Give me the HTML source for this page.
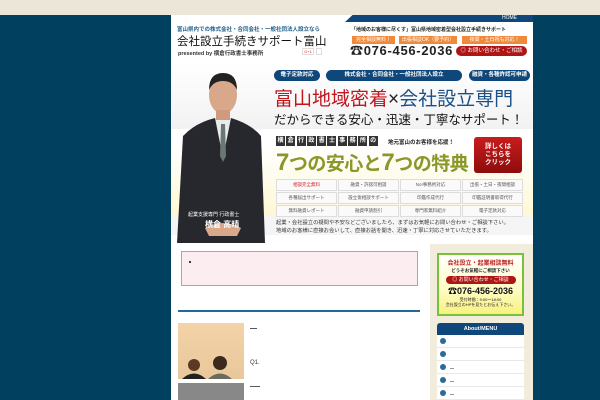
<!DOCTYPE html>
<html><head><meta charset="utf-8"><style>
*{margin:0;padding:0;box-sizing:border-box}
body{width:600px;height:400px;overflow:hidden;background:#02405f;font-family:"Liberation Sans","Noto Sans CJK JP",sans-serif;position:relative}
.a{position:absolute;white-space:nowrap}
.pill{position:absolute;background:#10477a;color:#fff;font-size:5.5px;font-weight:bold;height:11px;line-height:11px;border-radius:6px;text-align:center}
.tag{position:absolute;background:#f08a3a;color:#fff;font-size:5px;height:8px;line-height:8px;text-align:center;top:36px}
.g{position:absolute;font-size:4.5px;color:#555;background:#fafafa;border:1px solid #ddd;height:12px;line-height:10px;text-align:center;width:61px}
.mi{position:absolute;left:437px;width:87px;height:13px;border-bottom:1px solid #e8e8e8;background:#fff}
.mi i{position:absolute;left:3px;top:3px;width:6px;height:6px;border-radius:50%;background:#2d6a99}
.mi b{position:absolute;left:13px;top:7px;width:4px;height:1px;background:#999}
.k{background:#333;display:inline-block;width:9px;text-align:center;margin-right:1.3px}
</style></head><body>
<div class="a" style="left:0;top:0;width:600px;height:15px;background:#ece6d8"></div>
<div class="a" style="left:171px;top:15px;width:362px;height:385px;background:#fff"></div>
<!-- header -->
<div class="a" style="left:177px;top:25px;font-size:5.5px;color:#1e5c8a;font-weight:bold">富山県内での株式会社・合同会社・一般社団法人設立なら</div>
<div class="a" style="left:177px;top:33px;font-size:11.5px;color:#111">会社設立手続きサポート富山</div>
<div class="a" style="left:178px;top:49px;font-size:5.5px;color:#333;font-weight:bold">presented by 横倉行政書士事務所</div>
<div class="a" style="left:302px;top:48px;width:12px;height:7px;border:1px solid #ddd;font-size:4px;color:#d33;text-align:center;line-height:6px">G+1</div>
<div class="a" style="left:316px;top:48px;width:6px;height:7px;border:1px solid #ddd"></div>
<div class="a" style="left:345px;top:15px;width:188px;height:7px;background:#10477a;clip-path:polygon(4% 0,100% 0,100% 100%,0 100%)"></div>
<div class="a" style="left:502px;top:15px;font-size:5px;color:#fff;line-height:7px">HOME</div>
<div class="a" style="left:351px;top:26px;font-size:5px;color:#222;font-weight:bold">「地域のお客様に尽くす」富山県地域密着型会社設立手続きサポート</div>
<div class="tag" style="left:352px;width:43px">完全相談無料！</div>
<div class="tag" style="left:399px;width:58px">出張相談OK（要予約）</div>
<div class="tag" style="left:462px;width:65px">夜間・土日祝も対応！</div>
<div class="a" style="left:350px;top:44px;font-size:13px;line-height:14px;font-weight:bold;color:#222;letter-spacing:.7px">☎076-456-2036</div>
<div class="a" style="left:456px;top:46px;width:71px;height:10px;background:#b01515;border-radius:5px;color:#fff;font-size:5.5px;line-height:10px;text-align:center">◎ お問い合わせ・ご相談</div>
<!-- hero -->
<div class="a" style="left:171px;top:63px;width:362px;height:66px;background:linear-gradient(#fff,#f2f2f2)"></div>
<div class="a" style="left:171px;top:129px;width:362px;height:88px;background:linear-gradient(#fff 20%,#fdf8d2)"></div>
<div class="a" style="left:171px;top:215px;width:362px;height:20px;background:#f5f5f5"></div>
<svg class="a" style="left:175px;top:68px" width="95" height="175" viewBox="0 0 95 175">
<path d="M8 68 Q20 55 40 50 L56 50 Q76 56 86 68 L90 175 L2 175 Z" fill="#26282d"/>
<path d="M40 50 L48 90 L56 50 Z" fill="#e9ecef"/>
<path d="M46 56 L50 56 L51 88 L48 94 L45 88 Z" fill="#6a7772"/>
<ellipse cx="48" cy="27" rx="14" ry="19" fill="#d9a78a"/>
<path d="M34 22 Q34 5 48 5 Q62 5 62 22 Q58 13 48 13 Q38 13 34 22Z" fill="#222"/>
<rect x="41" y="42" width="14" height="10" fill="#cf9a7e"/>
<path d="M30 160 Q48 150 66 160 L62 168 L34 168Z" fill="#d9a78a"/>
</svg>
<div class="a" style="left:188px;top:211px;font-size:5px;color:#fff">起業支援専門 行政書士</div>
<div class="a" style="left:205px;top:219px;font-size:8px;color:#fff;font-weight:bold">横倉 高晴</div>
<div class="pill" style="left:274px;top:70px;width:46px">電子定款対応</div>
<div class="pill" style="left:326px;top:70px;width:136px">株式会社・合同会社・一般社団法人設立</div>
<div class="pill" style="left:469px;top:70px;width:61px">融資・各種許認可申請</div>
<div class="a" style="left:274px;top:88px;font-size:19px;line-height:23px;color:#c0161e">富山地域密着<span style="color:#222">×</span><span style="color:#1a4f86">会社設立専門</span></div>
<div class="a" style="left:274px;top:113px;font-size:12.5px;line-height:15px;color:#111">だからできる安心・迅速・丁寧なサポート！</div>
<div class="a" style="left:276px;top:136px;font-size:6px;line-height:10px;color:#fff;font-weight:bold"><span class="k">横</span><span class="k">倉</span><span class="k">行</span><span class="k">政</span><span class="k">書</span><span class="k">士</span><span class="k">事</span><span class="k">務</span><span class="k">所</span><span class="k">の</span></div>
<div class="a" style="left:388px;top:138px;font-size:5.5px;font-weight:bold;color:#222">地元富山のお客様を応援！</div>
<div class="a" style="left:276px;top:151px;font-size:19px;line-height:24px;font-weight:bold;color:#8a982a;letter-spacing:-.5px"><span style="font-size:24px">7</span>つの安心と<span style="font-size:24px">7</span>つの特典</div>
<div class="a" style="left:474px;top:137px;width:48px;height:36px;background:linear-gradient(#c81d1d,#8e0c0c);border-radius:3px;color:#fff;font-size:6.5px;font-weight:bold;line-height:8px;text-align:center;padding-top:6px">詳しくは<br>こちらを<br>クリック</div>
<div class="g" style="left:276px;top:179px;color:#c22">相談完全無料</div>
<div class="g" style="left:338px;top:179px">融資・許認可相談</div>
<div class="g" style="left:400px;top:179px">No!事務所対応</div>
<div class="g" style="left:462px;top:179px">出張・土日・夜間相談</div>
<div class="g" style="left:276px;top:192px">各種届出サポート</div>
<div class="g" style="left:338px;top:192px">設立後相談サポート</div>
<div class="g" style="left:400px;top:192px">印鑑作成代行</div>
<div class="g" style="left:462px;top:192px">印鑑証明書取得代行</div>
<div class="g" style="left:276px;top:205px">無料融資レポート</div>
<div class="g" style="left:338px;top:205px">融資申請割引</div>
<div class="g" style="left:400px;top:205px">専門家無料紹介</div>
<div class="g" style="left:462px;top:205px">電子定款対応</div>
<div class="a" style="left:276px;top:219px;font-size:5.3px;color:#333;line-height:8px">起業・会社設立の疑問や不安などございましたら、まずはお気軽にお問い合わせ・ご相談下さい。<br>地域のお客様に直接お会いして、直接お話を聞き、迅速・丁寧に対応させていただきます。</div>
<!-- main -->
<div class="a" style="left:181px;top:251px;width:237px;height:35px;background:#fcedf0;border:1px solid #c99"></div>
<div class="a" style="left:189px;top:261px;width:2px;height:2px;background:#000;border-radius:50%"></div>
<div class="a" style="left:178px;top:310px;width:242px;height:2px;background:#1e6aa0"></div>
<div class="a" style="left:178px;top:323px;width:66px;height:56px;background:linear-gradient(#f3d3a8,#e8c79b)"></div>
<svg class="a" style="left:178px;top:340px" width="66" height="39"><circle cx="16" cy="25" r="6" fill="#5a3a25"/><path d="M4 39 Q16 28 28 39Z" fill="#222"/><circle cx="42" cy="23" r="7" fill="#3b2a1d"/><path d="M30 39 Q42 28 54 39Z" fill="#6b6b60"/></svg>
<div class="a" style="left:178px;top:383px;width:66px;height:17px;background:#888"></div>
<div class="a" style="left:250px;top:328px;width:7px;height:1px;background:#556"></div>
<div class="a" style="left:250px;top:386px;width:10px;height:1px;background:#556"></div>
<div class="a" style="left:250px;top:360px;font-size:6px;color:#333">Q1.</div>
<!-- sidebar -->
<div class="a" style="left:430px;top:244px;width:103px;height:156px;background:#f1ecdc"></div>
<div class="a" style="left:437px;top:253px;width:87px;height:63px;border:2px solid #77c23a;background:linear-gradient(#fff,#fffbc2 60%,#f8f280);text-align:center">
<div style="font-size:6px;color:#c01e1e;font-weight:bold;margin-top:3px">会社設立・起業相談無料</div>
<div style="font-size:4.5px;color:#222;font-weight:bold;margin-top:1px">どうぞお気軽にご相談下さい</div>
<div style="margin:2px auto 0;width:70px;height:8px;background:#b01515;border-radius:4px;color:#fff;font-size:5px;line-height:8px">◎ お問い合わせ・ご相談</div>
<div style="font-size:9px;font-weight:bold;color:#111;line-height:12px;margin-top:1px">☎076-456-2036</div>
<div style="font-size:4px;color:#222;line-height:5px">受付時間：9:00～18:00<br>会社設立のHPを見たとお伝え下さい。</div>
</div>
<div class="a" style="left:437px;top:323px;width:87px;height:12px;background:#10477a;border-radius:3px 3px 0 0;color:#fff;font-size:5.5px;font-weight:bold;text-align:center;line-height:12px">About/MENU</div>
<div class="mi" style="top:335px"><i></i></div>
<div class="mi" style="top:348px"><i></i></div>
<div class="mi" style="top:361px"><i></i><b></b></div>
<div class="mi" style="top:374px"><i></i><b></b></div>
<div class="mi" style="top:387px"><i></i><b></b></div>
</body></html>
